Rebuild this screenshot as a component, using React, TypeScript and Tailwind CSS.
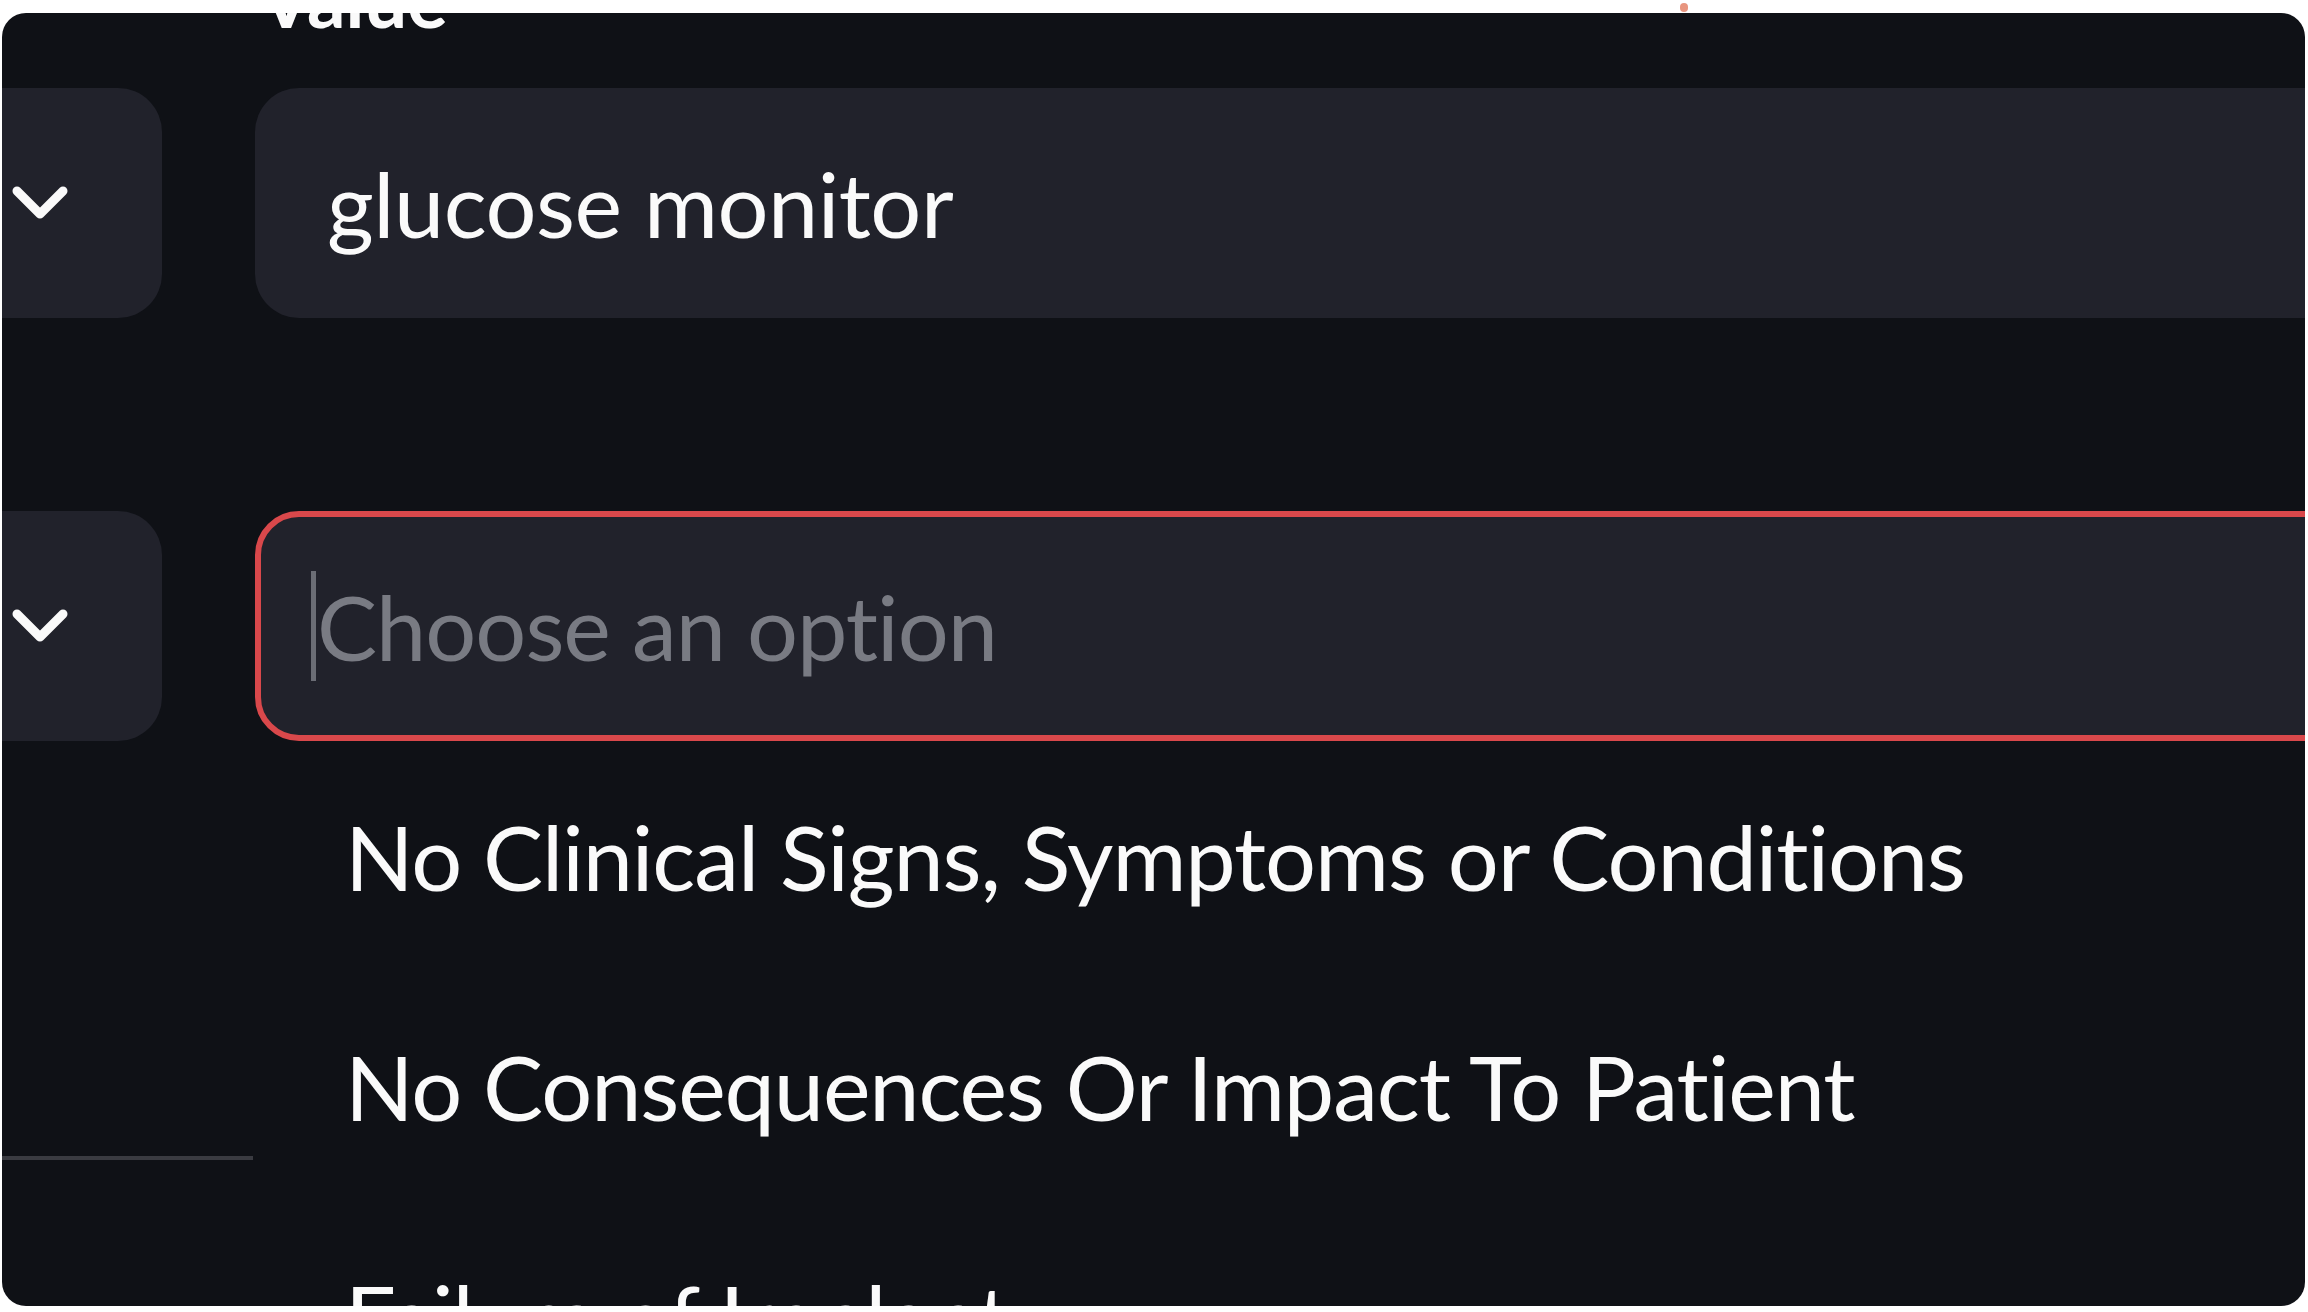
// Zoomed-in crop of a dark select form: two filter rows, the second one focused
// with its option list open underneath.

const font = { fontFamily: "Lato, 'Liberation Sans', sans-serif" };

function Chevron() {
  return (
    <svg width="60" height="40" viewBox="0 0 60 40" fill="none">
      <polyline
        points="7,8 30,31 53,8"
        stroke="#fafafa"
        strokeWidth="9"
        strokeLinecap="round"
        strokeLinejoin="round"
      />
    </svg>
  );
}

function SideSelect() {
  return (
    <div className="h-[230px] rounded-[44px] bg-[#21222b] flex items-center justify-end pr-[92px]">
      <Chevron />
    </div>
  );
}

const options = [
  "No Clinical Signs, Symptoms or Conditions",
  "No Consequences Or Impact To Patient",
  "Failure of Implant",
];

export default function App() {
  return (
    <div
      className="relative w-[2308px] h-[1312px] bg-white overflow-hidden [font-variant-ligatures:none]"
      style={font}
    >
      <div className="absolute left-[1680px] top-[3px] w-[8px] h-[9px] rounded-full bg-[#e8957f]" />

      <div className="ml-[2px] mt-[13px] w-[2303px] h-[1293px] rounded-[24px] bg-[#0f1116] overflow-hidden">
        <div className="flex -ml-[60px] -mr-[120px] gap-x-[93px]">
          {/* left column: operator selects */}
          <div className="w-[220px] shrink-0 flex flex-col">
            <div className="h-[75px]" />
            <SideSelect />
            <div className="h-[193px]" />
            <SideSelect />
            <div className="h-[415px]" />
            <div className="h-[4px] w-[311px] bg-[#3a3b41]" />
          </div>

          {/* right column: value input */}
          <div className="flex-1 flex flex-col">
            <div className="h-[75px]">
              <span className="block -mt-[60px] pl-[5px] text-[76px] leading-[91px] font-bold text-[#fafafa]">
                Value
              </span>
            </div>

            <div className="h-[230px] rounded-[44px] bg-[#21222b] flex items-center pl-[72px]">
              <span className="text-[90px] leading-[108px] tracking-[-0.5px] text-[#fafafa]">glucose monitor</span>
            </div>

            <div className="h-[193px]" />

            <div className="h-[230px] rounded-[44px] bg-[#21222b] border-[6px] border-[#d9484b] flex items-center pl-[50px]">
              <div className="w-[5px] h-[110px] bg-[#6b6d75] mr-[1px]" />
              <span className="text-[90px] leading-[108px] tracking-[-1px] text-[#797b83]">Choose an option</span>
            </div>

            <div className="flex flex-col">
              {options.map((o) => (
                <div key={o} className="h-[230px] flex items-center pl-[90px]">
                  <span className="text-[90px] leading-[108px] tracking-[-1.1px] text-[#fafafa] whitespace-nowrap">
                    {o}
                  </span>
                </div>
              ))}
            </div>
          </div>
        </div>
      </div>
    </div>
  );
}
